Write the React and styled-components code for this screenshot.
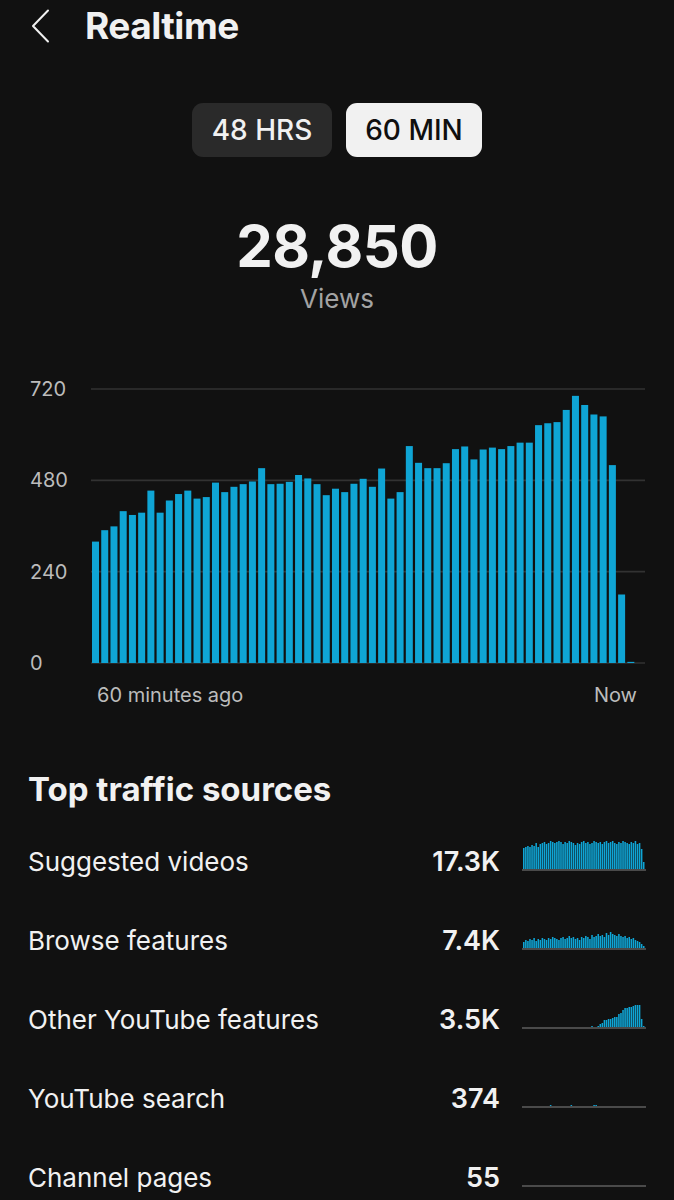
import React from 'react';
import styled, { createGlobalStyle } from 'styled-components';

const GlobalStyle = createGlobalStyle`
  html, body {
    margin: 0;
    padding: 0;
    background: #111111;
  }
  body {
    font-family: Inter, "Noto Sans", "Liberation Sans", sans-serif;
    color: #f1f1f1;
  }
`

const BLUE = '#0fa5d5';

// views per minute, oldest first
const minuteViews = [
  319, 349, 359, 399, 389, 395, 453, 395, 427, 444, 453, 432, 436, 474, 449,
  463, 470, 477, 512, 470, 471, 476, 494, 485, 470, 441, 458, 449, 471, 484,
  463, 511, 432, 449, 570, 526, 512, 512, 525, 562, 569, 535, 561, 566, 562,
  570, 579, 579, 625, 630, 633, 665, 702, 678, 653, 648, 520, 180, 3,
];

const zeros = (n) => Array.from({ length: n }, () => 0);

const sources = [
  {
    name: 'Suggested videos',
    value: '17.3K',
    spark: [
      21, 22, 23, 22, 24, 23, 26, 22, 25, 26, 27, 25, 26, 28, 27, 26, 27, 28, 27, 25,
      27, 26, 28, 27, 26, 24, 26, 25, 27, 28, 26, 27, 25, 26, 28, 27, 26, 27, 25, 27,
      28, 26, 27, 28, 26, 25, 27, 26, 28, 27, 26, 25, 27, 26, 28, 25, 26, 20, 7,
    ],
  },
  {
    name: 'Browse features',
    value: '7.4K',
    spark: [
      6, 8, 7, 9, 8, 10, 7, 9, 8, 10, 9, 8, 10, 9, 11, 10, 9, 8, 10, 11,
      9, 10, 12, 10, 11, 9, 10, 8, 11, 10, 12, 11, 9, 13, 11, 12, 14, 12, 13, 11,
      15, 13, 16, 14, 13, 12, 14, 12, 11, 12, 10, 11, 9, 10, 8, 7, 6, 4, 2,
    ],
  },
  {
    name: 'Other YouTube features',
    value: '3.5K',
    spark: [
      ...zeros(33), 1, 0, 0, 1, 3, 4, 7, 7, 8, 8, 9, 10, 10, 13, 14, 17, 19, 19,
      20, 20, 21, 22, 22, 22, 8, 1,
    ],
  },
  {
    name: 'YouTube search',
    value: '374',
    spark: [...zeros(13), 1, ...zeros(9), 1, ...zeros(10), 1, 1, ...zeros(23)],
  },
  {
    name: 'Channel pages',
    value: '55',
    spark: zeros(59),
  },
];

const Page = styled.div`
  width: 674px;
  min-height: 1200px;
  background: #111111;
  overflow: hidden;
`

const Header = styled.header`
  display: flex;
  align-items: center;
  height: 44px;
  padding: 4px 0 0 31px;
  gap: 35px;
`

const BackIcon = styled.svg`
  width: 19px;
  height: 34px;
  flex: none;
`

const Title = styled.h1`
  margin: 0;
  font-size: 37px;
  line-height: 44px;
  font-weight: 700;
  letter-spacing: -0.5px;
  color: #f1f1f1;
`

const Toggle = styled.div`
  display: flex;
  justify-content: center;
  gap: 14px;
  margin-top: 55px;
`

const ToggleButton = styled.button`
  height: 54px;
  padding: 0 18px;
  min-width: ${(p) => (p.$active ? 136 : 140)}px;
  border: none;
  border-radius: 11px;
  background: ${(p) => (p.$active ? '#f1f1f1' : '#2a2a2a')};
  color: ${(p) => (p.$active ? '#0f0f0f' : '#f1f1f1')};
  font-family: inherit;
  font-size: 28px;
  font-weight: 500;
`

const Total = styled.div`
  display: flex;
  flex-direction: column;
  align-items: center;
  margin-top: 57px;
`

const TotalNumber = styled.div`
  font-size: 58px;
  line-height: 64px;
  font-weight: 700;
  letter-spacing: -0.5px;
`

const TotalLabel = styled.div`
  margin-top: 5px;
  font-size: 26px;
  line-height: 32px;
  color: #a3a3a3;
`

const ChartRow = styled.div`
  display: flex;
  margin-top: 73px;
`

const YAxis = styled.div`
  width: 91px;
  padding-left: 30px;
  box-sizing: border-box;
  display: flex;
  flex-direction: column;
  justify-content: space-between;
  margin: -10px 0;
`

const AxisLabel = styled.span`
  font-size: 20px;
  line-height: 22px;
  color: #bcbcbc;
`

const Plot = styled.svg`
  display: block;
  width: 554px;
  height: 276px;
`

const XAxis = styled.div`
  display: flex;
  justify-content: space-between;
  margin-top: 20px;
  padding: 0 37px 0 97px;
`

const SectionTitle = styled.h2`
  margin: 64px 0 0;
  padding-left: 28px;
  font-size: 33px;
  line-height: 38px;
  font-weight: 700;
`

const SourceList = styled.div`
  margin-top: 12px;
`

const SourceRow = styled.div`
  display: grid;
  grid-template-columns: 1fr auto 124px;
  column-gap: 22px;
  align-items: baseline;
  height: 79px;
  padding: 21px 28px 0;
  box-sizing: border-box;
`

const SourceName = styled.span`
  font-size: 26px;
  line-height: 30px;
  color: #f1f1f1;
`

const SourceValue = styled.span`
  font-size: 27px;
  line-height: 30px;
  font-weight: 600;
  text-align: right;
`

const Spark = styled.svg`
  display: block;
  width: 124px;
  height: 30px;
  margin-bottom: -3px;
`

const PLOT_W = 554;
const PLOT_H = 276;
const MAX = 720;

function MainChart() {
  const base = PLOT_H - 1;
  const scale = (PLOT_H - 2) / MAX;
  const pitch = 9.23;
  return (
    <Plot viewBox={`0 0 ${PLOT_W} ${PLOT_H}`}>
      {[720, 480, 240, 0].map((v) => {
        const y = base - v * scale;
        return <line key={v} x1="0" x2={PLOT_W} y1={y} y2={y} stroke="#323232" strokeWidth="1.6" />;
      })}
      {minuteViews.map((v, i) => {
        const h = Math.max(v * scale, 1);
        return <rect key={i} x={1 + i * pitch} y={base - h} width="7" height={h} fill={BLUE} />;
      })}
    </Plot>
  );
}

function Sparkline({ data }) {
  const pitch = 122 / data.length;
  return (
    <Spark viewBox="0 0 124 30">
      {data.map((h, i) =>
        h > 0 ? (
          <rect key={i} x={1 + i * pitch} y={28 - h} width={pitch * 0.75} height={h} fill={BLUE} />
        ) : null
      )}
      <line x1="0" x2="124" y1="29" y2="29" stroke="#4a4a4a" strokeWidth="2" />
    </Spark>
  );
}

export default function App() {
  return (
    <Page>
      <GlobalStyle />
      <Header>
        <BackIcon viewBox="0 0 19 34" fill="none">
          <path d="M17 1.5 L2 17 L17 32.5" stroke="#f1f1f1" strokeWidth="2" strokeLinecap="round" strokeLinejoin="round" />
        </BackIcon>
        <Title>Realtime</Title>
      </Header>

      <Toggle>
        <ToggleButton>48 HRS</ToggleButton>
        <ToggleButton $active>60 MIN</ToggleButton>
      </Toggle>

      <Total>
        <TotalNumber>28,850</TotalNumber>
        <TotalLabel>Views</TotalLabel>
      </Total>

      <ChartRow>
        <YAxis>
          <AxisLabel>720</AxisLabel>
          <AxisLabel>480</AxisLabel>
          <AxisLabel>240</AxisLabel>
          <AxisLabel>0</AxisLabel>
        </YAxis>
        <MainChart />
      </ChartRow>
      <XAxis>
        <AxisLabel>60 minutes ago</AxisLabel>
        <AxisLabel>Now</AxisLabel>
      </XAxis>

      <SectionTitle>Top traffic sources</SectionTitle>
      <SourceList>
        {sources.map((s) => (
          <SourceRow key={s.name}>
            <SourceName>{s.name}</SourceName>
            <SourceValue>{s.value}</SourceValue>
            <Sparkline data={s.spark} />
          </SourceRow>
        ))}
      </SourceList>
    </Page>
  );
}
